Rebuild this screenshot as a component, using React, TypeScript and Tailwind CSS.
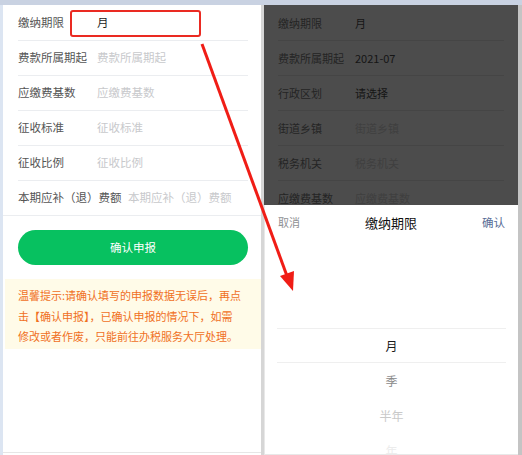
const font = { fontFamily: '"Noto Sans CJK SC", "Noto Sans", sans-serif' };

const leftRows = [
  { label: "缴纳期限", value: "月", filled: true },
  { label: "费款所属期起", value: "费款所属期起" },
  { label: "应缴费基数", value: "应缴费基数" },
  { label: "征收标准", value: "征收标准" },
  { label: "征收比例", value: "征收比例" },
  { label: "本期应补（退）费额", value: "本期应补（退）费额", wide: true },
];

const rightRows = [
  { label: "缴纳期限", value: "月", filled: true },
  { label: "费款所属期起", value: "2021-07", filled: true },
  { label: "行政区划", value: "请选择", filled: true },
  { label: "街道乡镇", value: "街道乡镇" },
  { label: "税务机关", value: "税务机关" },
  { label: "应缴费基数", value: "应缴费基数" },
];

const options = [
  { text: "月", color: "text-[#1a1a1a]" },
  { text: "季", color: "text-[#8a8a8a]" },
  { text: "半年", color: "text-[#c9c9c9]" },
  { text: "年", color: "text-[#ececec]" },
];

function LeftPanel() {
  return (
    <div className="w-[258px] h-full bg-white flex flex-col">
      <div className="pt-px">
        {leftRows.map((row, i) => (
          <div
            key={row.label}
            className={`h-[35px] flex items-center ${
              i === leftRows.length - 1 ? "pl-[15px] border-b border-[#ebedf0]" : "ml-[15px] mr-[13px] border-b border-[#ebedf0]"
            }`}
          >
            <span className={`${row.wide ? "w-[110px]" : "w-[79px]"} text-[11.5px] text-[#555]`}>{row.label}</span>
            <span className={`text-[11.5px] ${row.filled ? "text-[#222]" : "text-[#c8c9cc]"}`}>{row.value}</span>
          </div>
        ))}
      </div>

      <button className="mt-[14px] ml-[15px] w-[230px] h-[35px] rounded-full bg-[#07c160] text-white text-[11.5px]">
        确认申报
      </button>

      {/* 温馨提示 */}
      <div className="mt-[14px] ml-[2px] h-[70px] bg-[#fffbe8] pl-[13px] pt-[6px] text-[11px] leading-[20.5px] text-[#f0701e] whitespace-nowrap">
        <div>温馨提示:请确认填写的申报数据无误后，再点</div>
        <div>击【确认申报】，已确认申报的情况下，如需</div>
        <div>修改或者作废，只能前往办税服务大厅处理。</div>
      </div>

      <div className="flex-1" />
      <div className="h-px bg-[#e6e6e6]" />
      <div className="h-[2px]" />
    </div>
  );
}

function RightPanel() {
  return (
    <div className="w-[254px] h-full flex flex-col bg-[#4c4c4c] overflow-hidden">
      <div className="pt-px">
        {rightRows.map((row) => (
          <div key={row.label} className="h-[35px] ml-[14px] mr-[14px] flex items-center border-b border-[#454545]">
            <span className="w-[77px] text-[11px] text-[#242424]">{row.label}</span>
            <span className={`text-[11px] ${row.filled ? "text-[#151515]" : "text-[#3f3f3f]"}`}>{row.value}</span>
          </div>
        ))}
      </div>

      {/* picker popup */}
      <div className="absolute left-[264px] top-[205px] w-[254px] h-[250px] bg-white border-l border-[#e8e8e8] border-b">
        <div className="h-[35px] flex items-center justify-between px-[13px]">
          <span className="text-[11px] text-[#8f9093]">取消</span>
          <span className="text-[13px] text-[#111]">缴纳期限</span>
          <span className="text-[11.5px] text-[#576b95]">确认</span>
        </div>
        <div className="relative">
          <div className="h-[88px]" />
          {options.map((o) => (
            <div key={o.text} className={`h-[35px] flex items-center justify-center text-[12px] ${o.color}`}>
              {o.text}
            </div>
          ))}
          <div className="absolute left-[12px] right-[12px] top-[88px] h-[35px] border-y border-[#efefef]" />
        </div>
      </div>
    </div>
  );
}

export default function App() {
  return (
    <div className="relative w-[522px] h-[455px] overflow-hidden bg-[#dce5f2]" style={font}>
      <div className="h-[5px] bg-[#c9d2e2]" />
      <div className="flex h-[450px] pl-[3px]">
        <LeftPanel />
        <div className="w-[3px] bg-[#d6d6d6]" />
        <RightPanel />
        <div className="w-[4px] bg-[#c4c4c4]" />
      </div>

      {/* annotation: red box + arrow */}
      <div className="absolute left-[70px] top-[10px] w-[131px] h-[27px] border-2 border-[#ea2a22] rounded-[3px]" />
      <svg className="absolute left-0 top-0 pointer-events-none" width="522" height="455">
        <line x1="202" y1="44" x2="287" y2="276" stroke="#f01d16" strokeWidth="3" />
        <polygon points="293,291 280,276 294,271" fill="#f01d16" />
      </svg>
    </div>
  );
}
